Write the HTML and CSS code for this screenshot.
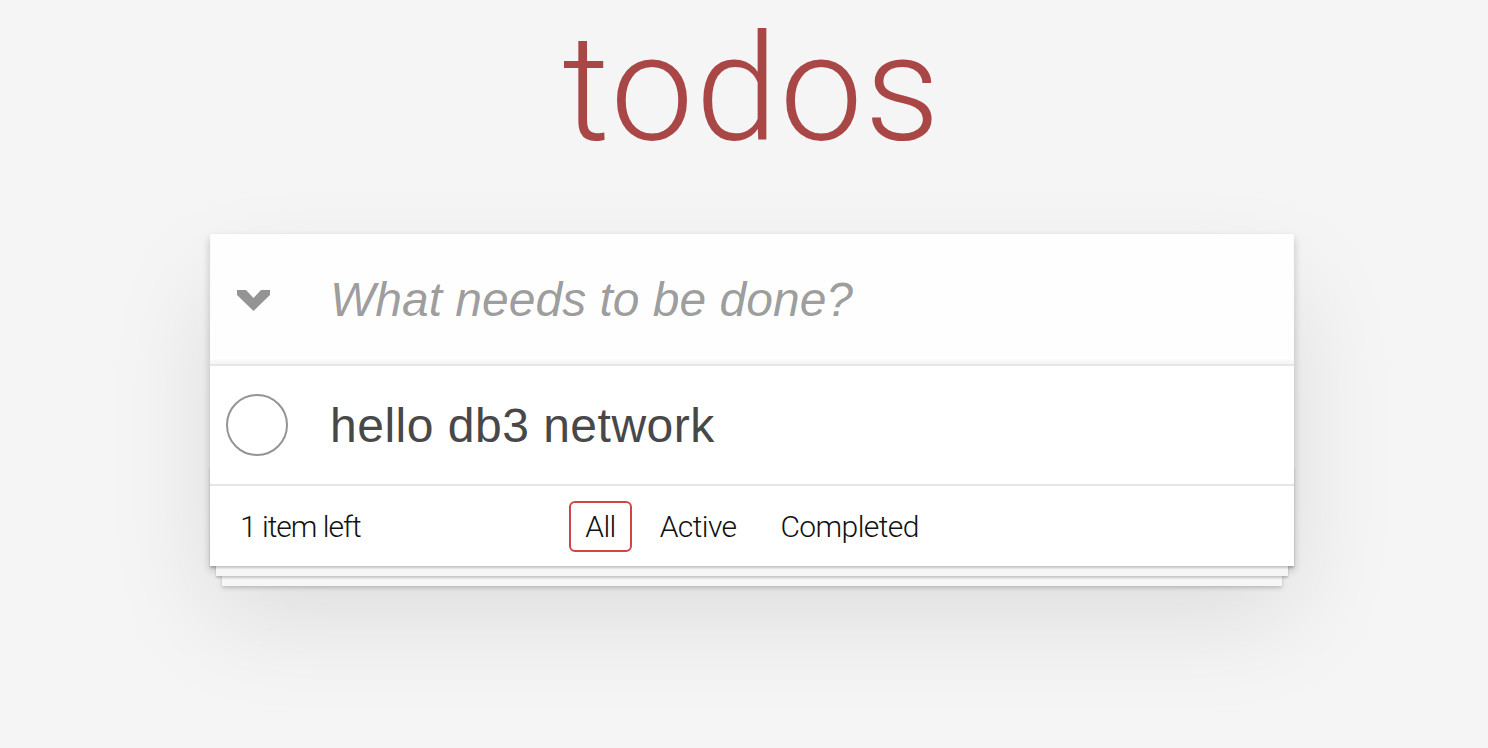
FILE: index.html
```html
<!DOCTYPE html>
<html lang="en">
<head>
  <meta charset="UTF-8">
  <meta name="viewport" content="width=device-width, initial-scale=1.0">
  <title>Todos</title>
  <link rel="stylesheet" href="styles.css">
</head>
<body>
  <h1 class="title">todos</h1>
  <section class="todoapp">
    <header class="new-row">
      <span class="toggle-all">
        <svg width="33" height="21" viewBox="0 0 33 21">
          <polygon points="0,0 9,0 16.5,8 24,0 33,0 33,5 16.5,21 0,5" fill="#949494"/>
        </svg>
      </span>
      <input class="new-todo" type="text" placeholder="What needs to be done?">
    </header>
    <ul class="todo-list">
      <li class="todo">
        <span class="toggle"></span>
        <label>hello db3 network</label>
      </li>
    </ul>
    <footer class="footer">
      <span class="todo-count">1 item left</span>
      <ul class="filters">
        <li><a href="#/" class="selected">All</a></li>
        <li><a href="#/active">Active</a></li>
        <li><a href="#/completed">Completed</a></li>
      </ul>
      <span></span>
    </footer>
  </section>
</body>
</html>
```

FILE: styles.css
```css
/* todo list, drawn at double size */
body {
  margin: 0;
  padding: 0 0 0 16px;
  background: #f5f5f5;
  color: #111;
  font-family: "Liberation Sans", Arial, sans-serif;
}

.title {
  margin: 0;
  padding-top: 16px;
  height: 218px;
  font-family: Roboto, "Liberation Sans", sans-serif;
  font-size: 148px;
  font-weight: 300;
  line-height: 148px;
  letter-spacing: 2px;
  text-align: center;
  color: #a94646;
}

.todoapp {
  position: relative;
  width: 1084px;
  margin: 0 auto 180px;
  background: #fff;
  box-shadow: 0 4px 8px 0 rgba(0, 0, 0, 0.2), 0 50px 100px 0 rgba(0, 0, 0, 0.1);
}

.new-row {
  display: grid;
  grid-template-columns: 120px 1fr;
  align-items: center;
  height: 130px;
  background: rgba(0, 0, 0, 0.003);
  box-shadow: inset 0 -4px 2px rgba(0, 0, 0, 0.03);
}

.toggle-all {
  padding-left: 27px;
  padding-top: 2px;
  display: flex;
}

.new-todo {
  border: none;
  outline: none;
  background: transparent;
  padding: 0;
  font-family: "Liberation Sans", Arial, sans-serif;
  font-size: 48px;
  color: #111;
}

.new-todo::placeholder {
  font-style: italic;
  color: rgba(0, 0, 0, 0.4);
}

.todo-list {
  margin: 0;
  padding: 0;
  list-style: none;
  border-top: 2px solid #e6e6e6;
}

.todo {
  display: grid;
  grid-template-columns: 120px 1fr;
  align-items: center;
  height: 118px;
}

.toggle {
  margin-left: 16px;
  width: 58px;
  height: 58px;
  border: 2px solid #949494;
  border-radius: 50%;
}

.todo label {
  font-size: 48px;
  letter-spacing: 0.5px;
  color: #484848;
}

.footer {
  position: relative;
  display: grid;
  grid-template-columns: 1fr auto 1fr;
  align-items: center;
  height: 80px;
  padding: 0 30px;
  border-top: 2px solid #e6e6e6;
  font-family: Roboto, "Liberation Sans", sans-serif;
  font-weight: 300;
  font-size: 30px;
}

.footer::before {
  content: '';
  position: absolute;
  right: 0;
  bottom: 0;
  left: 0;
  height: 100px;
  pointer-events: none;
  box-shadow: 0 2px 2px rgba(0, 0, 0, 0.2),
    0 16px 0 -6px #f6f6f6,
    0 18px 2px -6px rgba(0, 0, 0, 0.2),
    0 32px 0 -12px #f6f6f6,
    0 34px 4px -12px rgba(0, 0, 0, 0.2);
}

.todo-count {
  letter-spacing: -1px;
}

.filters {
  margin: 0;
  padding: 0;
  list-style: none;
  display: flex;
  letter-spacing: -0.6px;
}

.filters a {
  display: inline-block;
  margin: 0 6px;
  padding: 6px 14px;
  line-height: 35px;
  border: 2px solid transparent;
  border-radius: 6px;
  color: inherit;
  text-decoration: none;
}

.filters a.selected {
  border-color: #ce4646;
}
```
